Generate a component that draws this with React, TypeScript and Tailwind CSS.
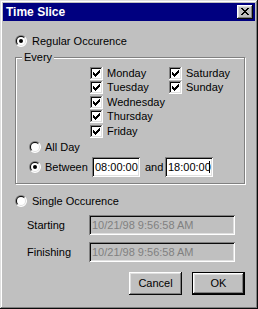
import React from "react";

const raised =
  "shadow-[inset_-1px_-1px_#0a0a0a,inset_1px_1px_#ffffff,inset_-2px_-2px_#808080,inset_2px_2px_#dfdfdf]";
const sunken =
  "shadow-[inset_1px_1px_#808080,inset_-1px_-1px_#ffffff,inset_2px_2px_#0a0a0a,inset_-2px_-2px_#dfdfdf]";

const Radio = ({ checked }: { checked?: boolean }) => (
  <svg width="12" height="12" viewBox="0 0 12 12" className="shrink-0">
    <path d="M1.757 10.243A6 6 0 0 1 10.243 1.757Z" fill="#808080" />
    <path d="M10.243 1.757A6 6 0 0 1 1.757 10.243Z" fill="#ffffff" />
    <path d="M2.464 9.536A5 5 0 0 1 9.536 2.464Z" fill="#0a0a0a" />
    <path d="M9.536 2.464A5 5 0 0 1 2.464 9.536Z" fill="#dfdfdf" />
    <circle cx="6" cy="6" r="4" fill="#ffffff" />
    {checked && <circle cx="6" cy="6" r="2" fill="#000000" />}
  </svg>
);

// x, y, width of each run of pixels in the tick
const tick: [number, number, number][] = [
  [9, 3, 1],
  [8, 4, 2],
  [3, 5, 1],
  [7, 5, 3],
  [3, 6, 2],
  [6, 6, 3],
  [3, 7, 5],
  [4, 8, 3],
  [5, 9, 1],
];

const CheckBox = () => (
  <svg width="13" height="13" viewBox="0 0 13 13" shapeRendering="crispEdges" className="shrink-0">
    <rect x="0" y="0" width="13" height="13" fill="#ffffff" />
    <rect x="0" y="0" width="12" height="1" fill="#808080" />
    <rect x="0" y="0" width="1" height="12" fill="#808080" />
    <rect x="1" y="1" width="10" height="1" fill="#0a0a0a" />
    <rect x="1" y="1" width="1" height="10" fill="#0a0a0a" />
    <rect x="1" y="11" width="11" height="1" fill="#dfdfdf" />
    <rect x="11" y="1" width="1" height="11" fill="#dfdfdf" />
    {tick.map(([x, y, w], i) => (
      <rect key={i} x={x} y={y} width={w} height="1" fill="#000000" />
    ))}
  </svg>
);

const closeX: [number, number, number][] = [
  [0, 0, 2],
  [6, 0, 2],
  [1, 1, 2],
  [5, 1, 2],
  [2, 2, 4],
  [3, 3, 2],
  [2, 4, 4],
  [1, 5, 2],
  [5, 5, 2],
  [0, 6, 2],
  [6, 6, 2],
];

const col1 = [
  { label: "Monday", cls: "" },
  { label: "Tuesday", cls: "mt-[1px]" },
  { label: "Wednesday", cls: "mt-[2px]" },
  { label: "Thursday", cls: "mt-[1px]" },
  { label: "Friday", cls: "mt-[2px]" },
];

const col2 = [
  { label: "Saturday", cls: "" },
  { label: "Sunday", cls: "mt-[1px]" },
];

const DayItem = ({ label, cls }: { label: string; cls: string }) => (
  <div className={`flex items-center h-[13px] ${cls}`}>
    <CheckBox />
    <span className="ml-[4px] whitespace-nowrap">{label}</span>
  </div>
);

const DateField = ({ label, value }: { label: string; value: string }) => (
  <div className="flex items-center">
    <span className="ml-[24px] w-[62px]">{label}</span>
    <div className={`w-[146px] h-[20px] bg-[#c0c0c0] text-[#808080] flex items-center pl-[3px] ${sunken}`}>
      {value}
    </div>
  </div>
);

export default function App() {
  return (
    <div
      className={`w-[258px] h-[309px] bg-[#c0c0c0] p-[3px] text-[11px] leading-[13px] text-black font-['Liberation_Sans',Arial,sans-serif] ${"shadow-[inset_-1px_-1px_#0a0a0a,inset_1px_1px_#dfdfdf,inset_-2px_-2px_#808080,inset_2px_2px_#ffffff]"}`}
    >
      <div className="flex items-center justify-between h-[18px] bg-[#000080] pl-[3px] pr-[2px]">
        <span className="text-white font-bold text-[12px] leading-[18px]">Time Slice</span>
        <div className={`w-[16px] h-[14px] bg-[#c0c0c0] pl-[4px] pt-[3px] ${raised}`}>
          <svg width="8" height="7" viewBox="0 0 8 7" shapeRendering="crispEdges" className="block">
            {closeX.map(([x, y, w], i) => (
              <rect key={i} x={x} y={y} width={w} height="1" fill="#000000" />
            ))}
          </svg>
        </div>
      </div>

      <div className="flex items-center h-[12px] mt-[14px] ml-[12px]">
        <Radio checked />
        <span className="ml-[5px]">Regular Occurence</span>
      </div>

      <div className="relative mt-[10px] ml-[12px] w-[230px] border border-[#808080] shadow-[inset_1px_1px_#ffffff,1px_1px_#ffffff] pt-[9px] pb-[6px]">
        <span className="absolute left-[6px] top-[-7px] bg-[#c0c0c0] px-[2px]">Every</span>

        <div className="flex ml-[74px]">
          <div className="flex flex-col w-[79px]">
            {col1.map((d) => (
              <DayItem key={d.label} label={d.label} cls={d.cls} />
            ))}
          </div>
          <div className="flex flex-col">
            {col2.map((d) => (
              <DayItem key={d.label} label={d.label} cls={d.cls} />
            ))}
          </div>
        </div>

        <div className="flex items-center h-[12px] mt-[3px] ml-[13px]">
          <Radio />
          <span className="ml-[4px]">All Day</span>
        </div>

        <div className="flex items-center h-[20px] mt-[4px] ml-[13px]">
          <Radio checked />
          <span className="ml-[4px] w-[47px]">Between</span>
          <div className={`w-[48px] h-[20px] bg-white flex items-center pl-[3px] ${sunken}`}>08:00:00</div>
          <span className="pl-[5px] w-[25px]">and</span>
          <div className={`w-[48px] h-[20px] bg-white flex items-center pl-[3px] pr-[2px] overflow-hidden whitespace-nowrap ${sunken}`}>
            <span>18:00:00</span>
            <span className="inline-block w-[1px] h-[12px] bg-black shrink-0 -ml-[2px]" />
          </div>
        </div>
      </div>

      <div className="flex items-center h-[12px] mt-[11px] ml-[12px]">
        <Radio />
        <span className="ml-[5px]">Single Occurence</span>
      </div>

      <div className="mt-[8px]">
        <DateField label="Starting" value="10/21/98 9:56:58 AM" />
      </div>
      <div className="mt-[7px]">
        <DateField label="Finishing" value="10/21/98 9:56:58 AM" />
      </div>

      <div className="flex justify-end gap-[10px] pr-[10px] mt-[10px]">
        <button className={`w-[53px] h-[23px] bg-[#c0c0c0] flex items-center justify-center ${raised}`}>
          Cancel
        </button>
        <button
          className={`w-[53px] h-[23px] bg-[#c0c0c0] border border-black flex items-center justify-center ${raised}`}
        >
          OK
        </button>
      </div>
    </div>
  );
}
